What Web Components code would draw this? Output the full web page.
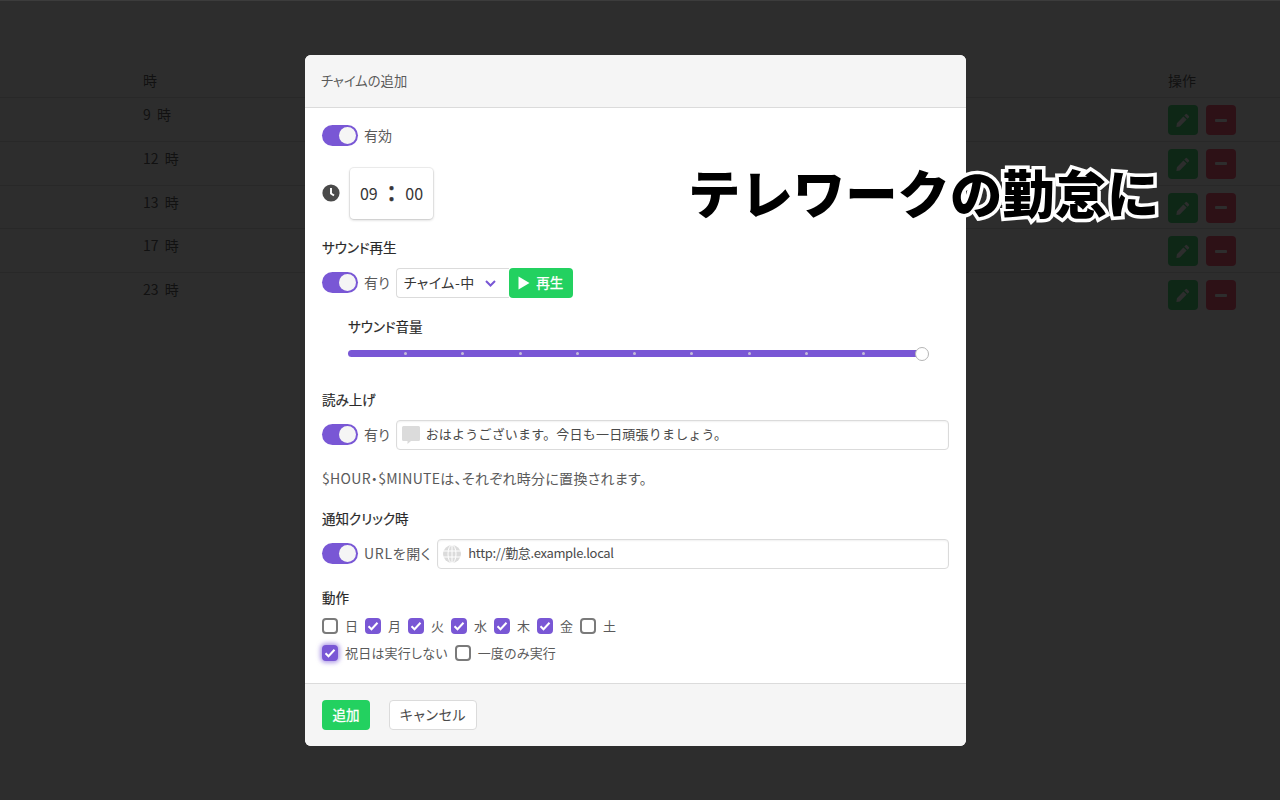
<!DOCTYPE html>
<html lang="ja">
<head>
<meta charset="utf-8">
<title>チャイムの追加</title>
<style>
    html, body { margin: 0; height: 100%; overflow: hidden; background: #fff; }
    body {
        font-family: "Noto Sans CJK JP", "Noto Sans", sans-serif;
        font-size: 14px;
        color: #4a4a4a;
        font-feature-settings: "palt";
    }
</style>
</head>
<body>
<chime-page>
    <chime-table>
        <chime-row hour="9 時"></chime-row>
        <chime-row hour="12 時"></chime-row>
        <chime-row hour="13 時"></chime-row>
        <chime-row hour="17 時"></chime-row>
        <chime-row hour="23 時"></chime-row>
    </chime-table>
    <chime-modal slot="modal">
        <span slot="title">チャイムの追加</span>

        <form-row><toggle-switch>有効</toggle-switch></form-row>
        <time-box style="margin-top:20px"></time-box>

        <section-label style="margin-top:19px">サウンド再生</section-label>
        <form-row style="margin-top:10px">
            <toggle-switch>有り</toggle-switch>
            <sound-select style="margin-left:6px">チャイム-中</sound-select>
        </form-row>
        <section-label style="margin-top:19px;padding-left:26px">サウンド音量</section-label>
        <volume-slider style="margin-top:13px"></volume-slider>

        <section-label style="margin-top:33px">読み上げ</section-label>
        <form-row style="margin-top:10px">
            <toggle-switch>有り</toggle-switch>
            <icon-input icon="comment" style="margin-left:6px;gap:6px;letter-spacing:.2px;font-feature-settings:normal">おはようございます。今日も一日頑張りましょう。</icon-input>
        </form-row>
        <form-note style="margin-top:19px">$HOUR・$MINUTEは、それぞれ時分に置換されます。</form-note>

        <section-label style="margin-top:20px">通知クリック時</section-label>
        <form-row style="margin-top:10px">
            <toggle-switch style="letter-spacing:.7px">URLを開く</toggle-switch>
            <icon-input icon="globe" style="margin-left:6px;letter-spacing:-.35px">http://勤怠.example.local</icon-input>
        </form-row>

        <section-label style="margin-top:19px">動作</section-label>
        <form-row style="margin-top:10px;height:16px;gap:7px">
            <check-box>日</check-box>
            <check-box checked>月</check-box>
            <check-box checked>火</check-box>
            <check-box checked>水</check-box>
            <check-box checked>木</check-box>
            <check-box checked>金</check-box>
            <check-box>土</check-box>
        </form-row>
        <form-row style="margin-top:11px;height:16px;gap:7px;letter-spacing:.2px">
            <check-box checked focused>祝日は実行しない</check-box>
            <check-box>一度のみ実行</check-box>
        </form-row>

        <action-button slot="footer" kind="success">追加</action-button>
        <action-button slot="footer" style="margin-left:19px;width:88px;letter-spacing:.6px">キャンセル</action-button>
    </chime-modal>
    <big-caption slot="caption">テレワークの勤怠に</big-caption>
</chime-page>

<script>
/** Page with the dimmed overlay */
class ChimePage extends HTMLElement {
    constructor() {
        super();
        this.attachShadow({ mode: "open" }).innerHTML = `
            <style>
                :host { display: block; position: relative; width: 1280px; height: 800px; overflow: hidden; }
                .overlay {
                    position: absolute; inset: 0;
                    background: rgba(10, 10, 10, .86);
                    border-top: 1px solid #3c3c3c;
                    box-sizing: border-box;
                    display: flex; align-items: center; justify-content: center;
                    padding-right: 9px;
                }
            </style>
            <slot></slot>
            <div class="overlay"><slot name="modal"></slot></div>
            <slot name="caption"></slot>
        `;
    }
}

/** Table behind the overlay */
class ChimeTable extends HTMLElement {
    constructor() {
        super();
        this.attachShadow({ mode: "open" }).innerHTML = `
            <style>
                :host { display: block; padding-top: 64px; color: #3c3c3c; font-feature-settings: normal; }
                .head {
                    display: flex; height: 33px; align-items: center;
                    border-bottom: 1px solid #dbdbdb; box-sizing: content-box;
                    padding-left: 143px;
                }
                .head span { padding-bottom: 2px; }
                .head span:last-child { margin-left: auto; width: 112px; }
            </style>
            <div class="head"><span>時</span><span>操作</span></div>
            <slot></slot>
        `;
    }
}

class ChimeRow extends HTMLElement {
    constructor() {
        super();
        this.attachShadow({ mode: "open" }).innerHTML = `
            <style>
                :host { display: flex; height: 43.75px; box-sizing: border-box; padding: 7px 44px 0 143px; border-bottom: 1px solid #dbdbdb; }
                :host(:last-child) { border-bottom: 0; }
                .hour { flex: 1; line-height: 18px; font-size: 14px; word-spacing: 3px; }
                .btn { width: 30px; height: 30px; border-radius: 4px; display: flex; align-items: center; justify-content: center; }
                .edit { background: #23d160; }
                .del { background: #ff3860; margin-left: 8px; }
                svg { display: block; }
            </style>
            <div class="hour"></div>
            <div class="btn edit"><svg width="14" height="14" viewBox="0 0 14 14"><path fill="#fff" d="M9.6 1.2a1 1 0 0 1 1.4 0l1.8 1.8a1 1 0 0 1 0 1.4l-1.3 1.3-3.2-3.2zM7.4 3.4l3.2 3.2-6.8 6.8L.4 13.9l.5-3.6z"/></svg></div>
            <div class="btn del"><svg width="12" height="3" viewBox="0 0 12 3"><rect width="12" height="3" rx="1" fill="#fff"/></svg></div>
        `;
        this.shadowRoot.querySelector(".hour").textContent = this.getAttribute("hour");
    }
}

/** Modal card */
class ChimeModal extends HTMLElement {
    constructor() {
        super();
        this.attachShadow({ mode: "open" }).innerHTML = `
            <style>
                :host {
                    width: 661px; height: 691px; background: #fff;
                    border-radius: 6px; overflow: hidden; color: #4a4a4a;
                    display: flex; flex-direction: column;
                }
                header {
                    height: 53px; box-sizing: border-box; background: #f5f5f5;
                    border-bottom: 1px solid #dbdbdb; padding: 0 16px 2px;
                    display: flex; align-items: center; font-size: 13.3px; color: #5a5a5a;
                }
                main { flex: 1; padding: 17px 17px 0; display: block; }
                footer {
                    height: 63px; box-sizing: border-box; background: #f5f5f5;
                    border-top: 1px solid #dbdbdb; padding: 16px 17px 0;
                    display: flex; align-items: flex-start;
                }
            </style>
            <header><slot name="title"></slot></header>
            <main><slot></slot></main>
            <footer><slot name="footer"></slot></footer>
        `;
    }
}

class FormRow extends HTMLElement {
    constructor() {
        super();
        this.attachShadow({ mode: "open" }).innerHTML = `
            <style>:host { display: flex; align-items: center; }</style>
            <slot></slot>
        `;
    }
}

class SectionLabel extends HTMLElement {
    constructor() {
        super();
        this.attachShadow({ mode: "open" }).innerHTML = `
            <style>:host { display: block; line-height: 18px; height: 20px; font-size: 13.5px; color: #2a2a2a; -webkit-text-stroke: .2px #2a2a2a; }</style>
            <slot></slot>
        `;
    }
}

class FormNote extends HTMLElement {
    constructor() {
        super();
        this.attachShadow({ mode: "open" }).innerHTML = `
            <style>:host { display: block; line-height: 18px; height: 20px; font-size: 14px; letter-spacing: .3px; color: #5a5a5a; }</style>
            <slot></slot>
        `;
    }
}

class ToggleSwitch extends HTMLElement {
    constructor() {
        super();
        this.attachShadow({ mode: "open" }).innerHTML = `
            <style>
                :host { display: inline-flex; align-items: center; gap: 6px; flex: none; white-space: nowrap; line-height: 21px; color: #5a5a5a; margin-bottom: 1px; }
                .track { width: 36px; height: 21px; border-radius: 11px; background: #7957d5; display: flex; align-items: center; justify-content: flex-end; padding-right: 2px; box-sizing: border-box; }
                .knob { width: 17px; height: 17px; border-radius: 50%; background: #f5f5f5; }
            </style>
            <span class="track"><span class="knob"></span></span><slot></slot>
        `;
    }
}

class TimeBox extends HTMLElement {
    constructor() {
        super();
        this.attachShadow({ mode: "open" }).innerHTML = `
            <style>
                :host { display: flex; align-items: center; gap: 10px; height: 52px; }
                svg { display: block; flex: none; }
                .box {
                    width: 83px; height: 51px; border-radius: 4px; background: #fff;
                    box-shadow: 0 1px 3px rgba(10,10,10,.2), 0 0 0 1px rgba(10,10,10,.06);
                    display: flex; align-items: center; justify-content: center;
                    font-size: 16px; color: #363636; font-feature-settings: normal;
                }
                .colon { font-size: 27px; line-height: 22px; margin: 0 10px 6px 10px; -webkit-text-stroke: .5px #363636; }
            </style>
            <svg width="18" height="18" viewBox="0 0 18 18"><circle cx="9" cy="9" r="8.6" fill="#4a4a4a"/><path d="M9 4v5.4l3 2.2" fill="none" stroke="#fff" stroke-width="1.9"/></svg>
            <div class="box"><span>09</span><span class="colon">:</span><span>00</span></div>
        `;
    }
}

class SoundSelect extends HTMLElement {
    constructor() {
        super();
        this.attachShadow({ mode: "open" }).innerHTML = `
            <style>
                :host { display: flex; height: 30px; }
                .select {
                    width: 113px; box-sizing: border-box; border: 1px solid #dbdbdb; border-right: 0;
                    border-radius: 4px 0 0 4px; display: flex; align-items: center; padding-left: 7px;
                    color: #363636; position: relative; letter-spacing: .5px;
                }
                .txt { padding-bottom: 2px; }
                svg { display: block; }
                .chev { position: absolute; right: 13px; top: 11px; }
                .play {
                    width: 64px; background: #23d160; color: #fff; border-radius: 4px;
                    display: flex; align-items: center; justify-content: center; gap: 6px; font-size: 13.5px;
                    box-sizing: border-box; -webkit-text-stroke: .3px #fff;
                }
            </style>
            <div class="select"><span class="txt"><slot></slot></span>
                <svg class="chev" width="11" height="7" viewBox="0 0 11 7"><path d="M1 1l4.5 4.5L10 1" fill="none" stroke="#7957d5" stroke-width="2"/></svg>
            </div>
            <div class="play"><svg width="12" height="14" viewBox="0 0 12 14"><path d="M.5.5v13L11.500 7z" fill="#fff"/></svg><span class="txt">再生</span></div>
        `;
    }
}

class VolumeSlider extends HTMLElement {
    constructor() {
        super();
        const ticks = Array.from({ length: 9 }, () => `<i></i>`).join("");
        this.attachShadow({ mode: "open" }).innerHTML = `
            <style>
                :host { display: block; margin-left: 26px; width: 574px; position: relative; height: 7px; }
                .track { height: 7px; border-radius: 4px 0 0 4px; background: #7957d5; display: flex; justify-content: space-between; align-items: center; padding: 0 57px 0 56px; }
                i { width: 3px; height: 3px; border-radius: 50%; background: #c4bcd8; display: block; }
                .thumb { position: absolute; right: -7px; top: -3.5px; width: 14px; height: 14px; box-sizing: border-box; border-radius: 50%; background: #fff; border: 1px solid #b5b5b5; }
            </style>
            <div class="track">${ticks}</div><div class="thumb"></div>
        `;
    }
}

const inputIcons = {
    comment: `<svg width="18" height="18" viewBox="0 0 18 18"><path fill="#dbdbdb" d="M1.5 0h15A1.5 1.5 0 0 1 18 1.5v12a1.500 1.500 0 0 1-1.500 1.500H9L5.500 18v-3h-4A1.500 1.500 0 0 1 0 13.500v-12A1.500 1.500 0 0 1 1.500 0z"/></svg>`,
    globe: `<svg width="18" height="18" viewBox="0 0 18 18"><circle cx="9" cy="9" r="9" fill="#dbdbdb"/><g fill="none" stroke="#fff" stroke-width="1"><ellipse cx="9" cy="9" rx="4" ry="9"/><path d="M9 0v18M0 6h18M0 12h18"/></g></svg>`
};

class IconInput extends HTMLElement {
    constructor() {
        super();
        this.attachShadow({ mode: "open" }).innerHTML = `
            <style>
                :host { display: flex; flex: 1; align-items: center; gap: 7px; height: 30px; box-sizing: border-box; border: 1px solid #dbdbdb; border-radius: 4px; padding-left: 5px; box-shadow: inset 0 1px 2px rgba(10,10,10,.06); color: #4a4a4a; font-size: 13px; white-space: nowrap; }
                svg { display: block; flex: none; }
                span { padding-bottom: 3px; }
            </style>
            ${inputIcons[this.getAttribute("icon")]}<span><slot></slot></span>
        `;
    }
}

class CheckBox extends HTMLElement {
    constructor() {
        super();
        const mark = this.hasAttribute("checked")
            ? `<svg width="16" height="16" viewBox="0 0 16 16"><path d="M3.500 8.200l3 3 6-6.500" fill="none" stroke="#fff" stroke-width="2"/></svg>` : "";
        this.attachShadow({ mode: "open" }).innerHTML = `
            <style>
                :host { display: inline-flex; align-items: center; gap: 7px; height: 16px; white-space: nowrap; color: #5a5a5a; font-size: 13px; }
                .box { width: 16px; height: 16px; box-sizing: border-box; border: 2px solid #7a7a7a; border-radius: 4px; flex: none; position: relative; }
                :host([checked]) .box { background: #7957d5; border-color: #7957d5; }
                :host([focused]) .box { box-shadow: 0 0 4px 2px rgba(121, 87, 213, .55); }
                svg { position: absolute; left: -2px; top: -2px; display: block; }
                .txt { padding-bottom: 2px; }
            </style>
            <span class="box">${mark}</span><span class="txt"><slot></slot></span>
        `;
    }
}

class ActionButton extends HTMLElement {
    constructor() {
        super();
        this.attachShadow({ mode: "open" }).innerHTML = `
            <style>
                :host { display: inline-flex; align-items: center; justify-content: center; height: 30px; box-sizing: border-box; border: 1px solid #dbdbdb; border-radius: 4px; background: #fff; color: #4a4a4a; font-size: 14px; padding-bottom: 2px; }
                :host([kind="success"]) { background: #23d160; border-color: transparent; color: #fff; width: 48px; font-size: 13.5px; -webkit-text-stroke: .3px #fff; }
            </style>
            <slot></slot>
        `;
    }
}

class BigCaption extends HTMLElement {
    constructor() {
        super();
        this.attachShadow({ mode: "open" }).innerHTML = `
            <style>
                :host {
                    position: absolute; left: 688px; top: 153px; white-space: nowrap;
                    font-family: "Noto Sans CJK JP", sans-serif; font-feature-settings: normal;
                    font-size: 52.4px; line-height: 76px; font-weight: 900; color: #000;
                    -webkit-text-stroke: 7px #fff; paint-order: stroke fill;
                }
            </style>
            <slot></slot>
        `;
    }
}

customElements.define("chime-page", ChimePage);
customElements.define("chime-table", ChimeTable);
customElements.define("chime-row", ChimeRow);
customElements.define("chime-modal", ChimeModal);
customElements.define("form-row", FormRow);
customElements.define("section-label", SectionLabel);
customElements.define("form-note", FormNote);
customElements.define("toggle-switch", ToggleSwitch);
customElements.define("time-box", TimeBox);
customElements.define("sound-select", SoundSelect);
customElements.define("volume-slider", VolumeSlider);
customElements.define("icon-input", IconInput);
customElements.define("check-box", CheckBox);
customElements.define("action-button", ActionButton);
customElements.define("big-caption", BigCaption);
</script>
</body>
</html>
